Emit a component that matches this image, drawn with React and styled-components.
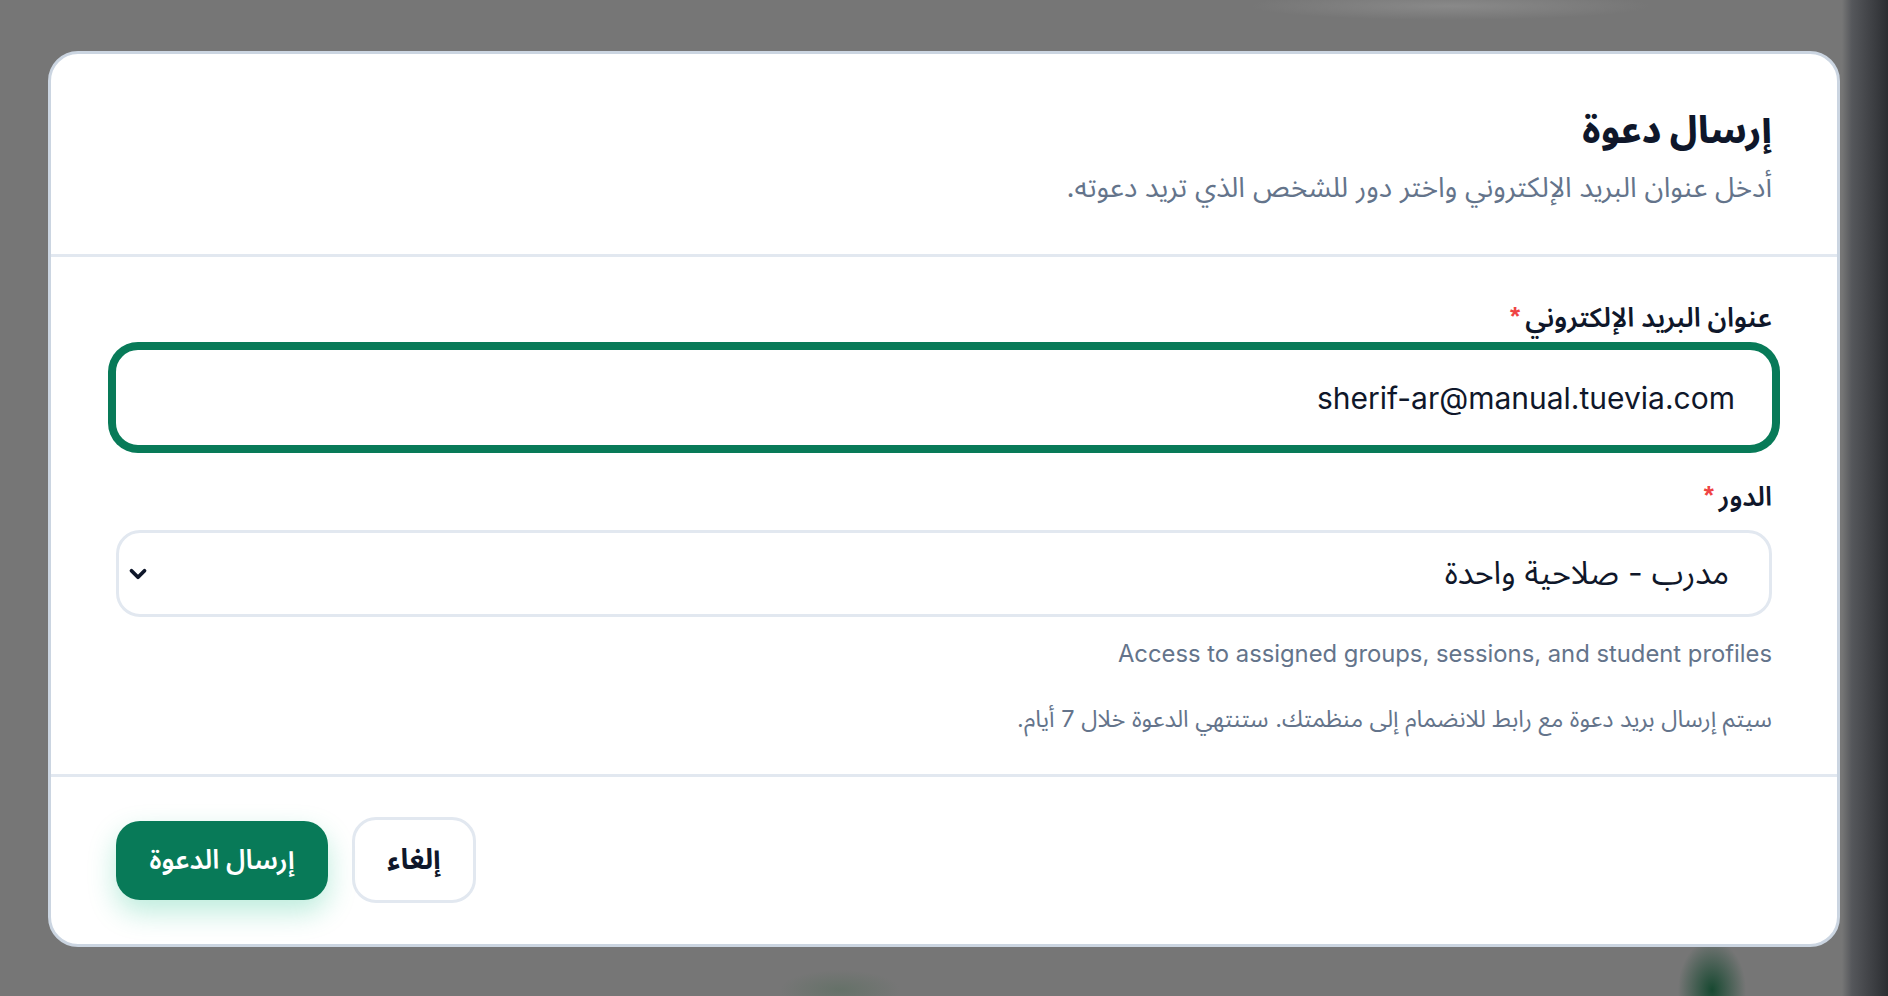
import React from 'react'
import styled, { createGlobalStyle } from 'styled-components'
import { ChevronDown } from 'lucide-react'

const GlobalStyle = createGlobalStyle`
  html, body {
    margin: 0;
    padding: 0;
  }
  body {
    width: 1888px;
    height: 996px;
    overflow: hidden;
    font-family: Inter, "Noto Sans Arabic", "Noto Sans", "DejaVu Sans", sans-serif;
    background:
      radial-gradient(ellipse 34px 50px at 1712px 990px, rgba(18, 70, 45, 0.95), rgba(18, 70, 45, 0) 100%),
      radial-gradient(ellipse 60px 20px at 840px 990px, rgba(90, 110, 95, 0.6), rgba(90, 110, 95, 0) 100%),
      radial-gradient(ellipse 200px 14px at 1450px 6px, rgba(150, 150, 150, 0.6), rgba(150, 150, 150, 0) 100%),
      linear-gradient(to right, rgba(0, 0, 0, 0) 1842px, #55575b 1852px, #2c2e32 1888px),
      #767676;
  }
`

const Overlay = styled.div`
  box-sizing: border-box;
  width: 1888px;
  height: 996px;
  padding: 51px 48px 0 48px;
  direction: rtl;
`

const Modal = styled.div`
  box-sizing: border-box;
  width: 1792px;
  background: #ffffff;
  border: 3px solid #cbd5e1;
  border-radius: 30px;
  overflow: hidden;
`

const Header = styled.div`
  padding: 52px 65px 50px;
  border-bottom: 3px solid #e2e8f0;
  display: flex;
  flex-direction: column;
  gap: 16px;
`

const Title = styled.h2`
  margin: 0;
  font-size: 37px;
  line-height: 48px;
  font-weight: 800;
  color: #0f172a;
`

const Subtitle = styled.p`
  margin: 0;
  font-size: 28px;
  line-height: 34px;
  color: #64748b;
`

const Body = styled.div`
  padding: 45px 65px 40px;
  display: flex;
  flex-direction: column;
`

const Label = styled.label`
  display: flex;
  align-items: center;
  gap: 5px;
  height: 32px;
  font-size: 27px;
  font-weight: 600;
  color: #0f172a;
  margin-bottom: ${p => p.$gap}px;
`

const Star = styled.span`
  color: #ef4444;
  font-family: "Liberation Sans", sans-serif;
  font-size: 26px;
  font-weight: 700;
  line-height: 1;
  margin-top: -4px;
`

const EmailInput = styled.input`
  box-sizing: border-box;
  display: block;
  width: calc(100% + 8px);
  margin: 0 -4px;
  height: 103px;
  padding: 0 37px;
  border: 4px solid #087a58;
  box-shadow: 0 0 0 4px #087a58;
  border-radius: 26px;
  outline: none;
  font-family: Inter, sans-serif;
  font-size: 30px;
  color: #0f172a;
  direction: ltr;
  text-align: right;
  background: #fff;
`

const Field = styled.div`
  display: flex;
  flex-direction: column;
  margin-bottom: ${p => p.$gap}px;
`

const SelectBox = styled.div`
  box-sizing: border-box;
  height: 87px;
  border: 3px solid #e2e8f0;
  border-radius: 24px;
  display: flex;
  align-items: center;
  justify-content: space-between;
  padding: 0 40px 0 6px;
  font-size: 32px;
  color: #0f172a;
  background: #fff;
`

const Hint = styled.p`
  margin: ${p => p.$top}px 0 0;
  font-size: ${p => p.$size}px;
  line-height: 30px;
  color: #64748b;
  direction: ${p => p.$dir || 'rtl'};
  text-align: right;
`

const Footer = styled.div`
  border-top: 3px solid #e2e8f0;
  padding: 40px 65px 41px;
  display: flex;
  align-items: center;
  justify-content: flex-end;
  gap: 24px;
`

const Button = styled.button`
  box-sizing: border-box;
  font-family: inherit;
  font-weight: 600;
  border-radius: 24px;
  cursor: pointer;
  display: flex;
  align-items: center;
  justify-content: center;
`

const CancelButton = styled(Button)`
  width: 124px;
  height: 86px;
  background: #fff;
  color: #0f172a;
  border: 3px solid #e2e8f0;
  font-size: 28px;
  font-weight: 700;
`

const SubmitButton = styled(Button)`
  width: 212px;
  height: 79px;
  background: #087a58;
  color: #fff;
  border: none;
  font-size: 27px;
  box-shadow: 0 12px 28px rgba(16, 185, 129, 0.28);
`

export default function App() {
  return (
    <>
      <GlobalStyle />
      <Overlay>
        <Modal>
          <Header>
            <Title>إرسال دعوة</Title>
            <Subtitle>أدخل عنوان البريد الإلكتروني واختر دور للشخص الذي تريد دعوته.</Subtitle>
          </Header>
          <Body>
            <Field $gap={32}>
              <Label $gap={12}>عنوان البريد الإلكتروني<Star>*</Star></Label>
              <EmailInput readOnly value="sherif-ar@manual.tuevia.com" />
            </Field>
            <Field $gap={0}>
              <Label $gap={17}>الدور<Star>*</Star></Label>
              <SelectBox>
                <span>مدرب - صلاحية واحدة</span>
                <ChevronDown size={26} strokeWidth={3.5} color="#0f172a" />
              </SelectBox>
            </Field>
            <Hint $top={22} $size={23.8} $dir="ltr">Access to assigned groups, sessions, and student profiles</Hint>
            <Hint $top={35} $size={23.5}>سيتم إرسال بريد دعوة مع رابط للانضمام إلى منظمتك. ستنتهي الدعوة خلال 7 أيام.</Hint>
          </Body>
          <Footer>
            <CancelButton>إلغاء</CancelButton>
            <SubmitButton>إرسال الدعوة</SubmitButton>
          </Footer>
        </Modal>
      </Overlay>
    </>
  )
}
